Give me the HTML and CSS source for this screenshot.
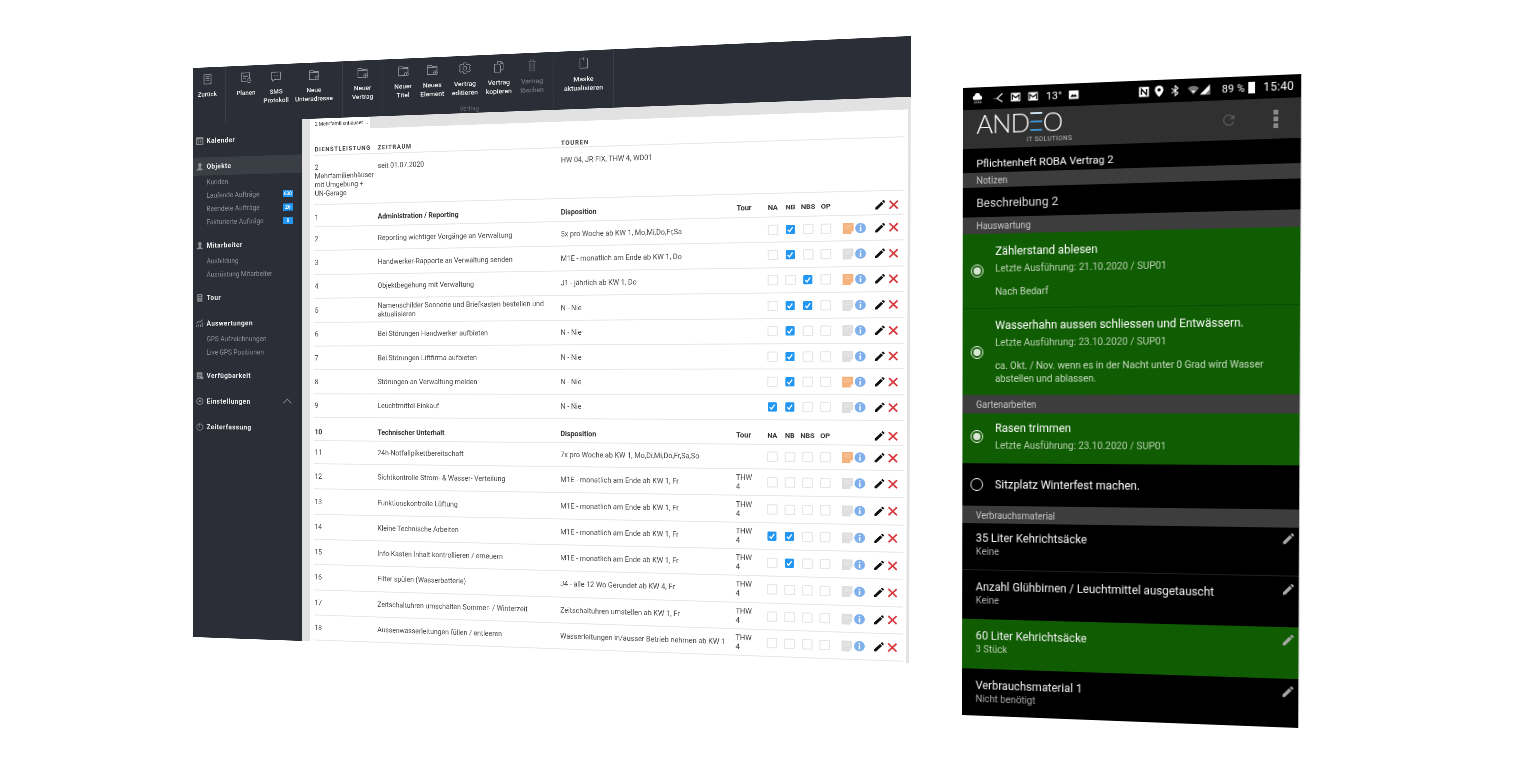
FILE: index.html
```html
<!DOCTYPE html>
<html lang="de">
<head>
  <meta charset="UTF-8">
  <meta name="viewport" content="width=device-width, initial-scale=1.0">
  <title>ANDEO Pflichtenheft</title>
  <link rel="stylesheet" href="styles.css">
</head>
<body>
  <svg class="icon-defs" width="0" height="0">
    <symbol id="i-folder" viewBox="0 0 24 24"><path d="M3 21V4h7l2 2h9v15zM3 8h18" fill="none" stroke="currentColor" stroke-width="1.2"/><circle cx="18" cy="18" r="3.6" fill="#2b2e36" stroke="currentColor" stroke-width="1.2"/><path d="M18 16v4M16 18h4" stroke="currentColor"/></symbol>
    <symbol id="i-back" viewBox="0 0 24 24"><path d="M5 3h14v18H5zM8 7h8M8 11h8M8 15h8" fill="none" stroke="currentColor" stroke-width="1.6"/></symbol>
    <symbol id="i-plan" viewBox="0 0 24 24"><path d="M3 3h16v16H3zM6 7h10M6 10h10M6 13h6" fill="none" stroke="currentColor" stroke-width="1.2"/><circle cx="18" cy="18" r="4" fill="#2b2e36" stroke="currentColor" stroke-width="1.2"/><path d="M18 16v2h2" fill="none" stroke="currentColor"/></symbol>
    <symbol id="i-sms" viewBox="0 0 24 24"><path d="M3 4h18v14H9l-4 3v-3H3z" fill="none" stroke="currentColor" stroke-width="1.2"/><path d="M8 11h1.500M11.300 11h1.500M14.600 11h1.500" stroke="currentColor" stroke-width="1.400"/></symbol>
    <symbol id="i-gear" viewBox="0 0 24 24"><path d="M10 2h4l.6 3 2.400 1 2.600-1.600 2.800 2.800L20.800 10l1 2-1 2 1.600 2.800-2.800 2.800-2.600-1.600-2.400 1-.6 3h-4l-.6-3-2.400-1-2.600 1.600-2.800-2.800L3.200 14l-1-2 1-2-1.600-2.800 2.800-2.800L7 6l2.400-1z" fill="none" stroke="currentColor" stroke-width="1.200"/><circle cx="12" cy="12" r="3.500" fill="none" stroke="currentColor" stroke-width="1.200"/></symbol>
    <symbol id="i-copy" viewBox="0 0 24 24"><path d="M4 7h8l3 3v12H4z" fill="none" stroke="currentColor" stroke-width="1.300"/><path d="M10 7V2h6l4 4v12h-5M16 2v4h4" fill="none" stroke="currentColor" stroke-width="1.300"/></symbol>
    <symbol id="i-trash" viewBox="0 0 24 24"><path d="M5 5h14M9 5V2h6v3M7 5v17h10V5M10 8v11M14 8v11" fill="none" stroke="currentColor" stroke-width="1.300"/></symbol>
    <symbol id="i-mask" viewBox="0 0 24 24"><path d="M9 4H5v17h14V4h-2M13 1l-3 3 3 3" fill="none" stroke="currentColor" stroke-width="1.300"/></symbol>
    <symbol id="i-calendar" viewBox="0 0 16 16"><path d="M1 1h14v14H1z" fill="#8b8d92"/><path d="M3 5h10v8H3z" fill="#2b2e36"/><path d="M5 7h2v4H5zM9 7h2v4H9z" fill="#8b8d92"/></symbol>
    <symbol id="i-person" viewBox="0 0 16 16"><circle cx="8" cy="5" r="3.500" fill="#8b8d92"/><path d="M6 8h4v3l4 2v2H2v-2l4-2z" fill="#8b8d92"/></symbol>
    <symbol id="i-book" viewBox="0 0 16 16"><path d="M3 1h10v14H3z" fill="#8b8d92"/><path d="M5 3h6v2H5zM5 7h6v1H5zM5 10h6v1H5z" fill="#2b2e36"/></symbol>
    <symbol id="i-chart" viewBox="0 0 16 16"><path d="M1 15v-4M5 15V9M9 15v-5M13 15V6M1 8l4-4 3 2 6-5" fill="none" stroke="#8b8d92" stroke-width="1.500"/></symbol>
    <symbol id="i-doc" viewBox="0 0 16 16"><path d="M2 2h11v12H2z" fill="#8b8d92"/><path d="M4 5h7M4 8h7M4 11h4" stroke="#2b2e36"/><circle cx="12.500" cy="12.500" r="2.500" fill="#8b8d92"/></symbol>
    <symbol id="i-cog" viewBox="0 0 16 16"><circle cx="8" cy="8" r="6" fill="none" stroke="#8b8d92" stroke-width="1.600"/><circle cx="8" cy="8" r="2" fill="#8b8d92"/></symbol>
    <symbol id="i-clock" viewBox="0 0 16 16"><circle cx="8" cy="8.500" r="6" fill="none" stroke="#8b8d92" stroke-width="1.300"/><path d="M8 1v8" stroke="#8b8d92" stroke-width="1.300"/></symbol>
    <symbol id="i-note" viewBox="0 0 22 24"><path d="M1 2h20v15l-5 6H1z" fill="currentColor"/><path d="M21 17h-5v6z" fill="#fff" opacity=".55"/><path d="M5 7h12M5 11h12" stroke="#fff" opacity=".35" stroke-width="1.500"/></symbol>
    <symbol id="i-info" viewBox="0 0 22 22"><circle cx="11" cy="11" r="11" fill="#7fb0ec"/><path d="M9.500 9h3v9h-3zM9.500 4h3v3h-3z" fill="#fff"/></symbol>
    <symbol id="i-pencil" viewBox="0 0 24 24"><path d="M20.710 7.040c.39-.39.39-1.040 0-1.410l-2.340-2.340c-.37-.39-1.020-.39-1.410 0l-1.840 1.830 3.750 3.750M3 17.250V21h3.750L17.810 9.930l-3.750-3.750z" fill="currentColor"/></symbol>
    <symbol id="i-x" viewBox="0 0 20 20"><path d="M2 2l16 16M18 2L2 18" fill="none" stroke="#d63a3f" stroke-width="3.400"/></symbol>
    <symbol id="i-check" viewBox="0 0 16 16"><path d="M3.500 8.500l3 3.500 5.500-8" fill="none" stroke="#fff" stroke-width="2.200"/></symbol>
    <symbol id="s-cloud" viewBox="0 0 16 16"><path d="M4 10a3 3 0 0 1 0-6 4 4 0 0 1 8 0 3 3 0 0 1 0 6z" fill="#fff"/><path d="M4 12v3M7 12v3M10 12v3M13 12v3" stroke="#fff"/></symbol>
    <symbol id="s-share" viewBox="0 0 16 16"><path d="M14 2L6 9l8 5M1 9h1M3.500 9h1" fill="none" stroke="#fff" stroke-width="1.500"/></symbol>
    <symbol id="s-mail" viewBox="0 0 16 16"><path d="M1 2h14v12H1z" fill="#fff"/><path d="M3 12V5l5 4 5-4v7" fill="none" stroke="#000" stroke-width="1.500"/></symbol>
    <symbol id="s-image" viewBox="0 0 16 16"><path d="M1 2h14v12H1z" fill="#fff"/><path d="M3 11l3-4 2 2 2-2 3 4z" fill="#000"/></symbol>
    <symbol id="s-nfc" viewBox="0 0 16 16"><path d="M1 1h14v14H1z" fill="#fff"/><path d="M4.500 12V4l7 8V4" fill="none" stroke="#000" stroke-width="1.800"/></symbol>
    <symbol id="s-pin" viewBox="0 0 16 16"><path d="M8 0a6 6 0 0 1 6 6c0 4-6 10-6 10S2 10 2 6a6 6 0 0 1 6-6z" fill="#fff"/><circle cx="8" cy="6" r="2.300" fill="#000"/></symbol>
    <symbol id="s-bt" viewBox="0 0 16 16"><path d="M3 4.500l9 7-4 3.500V1l4 3.500-9 7" fill="none" stroke="#fff" stroke-width="1.400"/></symbol>
    <symbol id="s-wifi" viewBox="0 0 18 16"><path d="M0 5q9-7 18 0l-9 10z" fill="#777"/><path d="M5.500 9h7L9 13z" fill="#fff"/></symbol>
    <symbol id="s-signal" viewBox="0 0 16 16"><path d="M15 1v14H1z" fill="#fff"/><path d="M15 8v7H8z" fill="#777"/></symbol>
    <symbol id="s-refresh" viewBox="0 0 24 24"><path d="M17.650 6.350A8 8 0 1 0 19.700 14h-2.100a6 6 0 1 1-1.400-6.200L13 11h7V4z" fill="currentColor"/></symbol>
  </svg>

  <div class="stage">
    <!-- Desktop window -->
    <section class="desk">
      <div class="toolbar">
        <div class="tool-group group-back">
          <div class="tool-row">
            <div class="tool"><svg><use href="#i-back"/></svg><span>Zurück</span></div>
          </div>
        </div>
        <div class="tool-group group-main">
          <div class="tool-row">
            <div class="tool"><svg><use href="#i-plan"/></svg><span>Planen</span></div>
            <div class="tool"><svg><use href="#i-sms"/></svg><span>SMS<br>Protokoll</span></div>
            <div class="tool"><svg><use href="#i-folder"/></svg><span>Neue<br>Unteradresse</span></div>
          </div>
        </div>
        <div class="tool-group group-new">
          <div class="tool-row">
            <div class="tool"><svg><use href="#i-folder"/></svg><span>Neuer<br>Vertrag</span></div>
          </div>
        </div>
        <div class="tool-group group-contract">
          <div class="tool-row">
            <div class="tool"><svg><use href="#i-folder"/></svg><span>Neuer<br>Titel</span></div>
            <div class="tool"><svg><use href="#i-folder"/></svg><span>Neues<br>Element</span></div>
            <div class="tool"><svg><use href="#i-gear"/></svg><span>Vertrag<br>editieren</span></div>
            <div class="tool"><svg><use href="#i-copy"/></svg><span>Vertrag<br>kopieren</span></div>
            <div class="tool tool-off"><svg><use href="#i-trash"/></svg><span>Vertrag<br>löschen</span></div>
          </div>
          <div class="tool-caption">Vertrag</div>
        </div>
        <div class="tool-group group-mask">
          <div class="tool-row">
            <div class="tool"><svg><use href="#i-mask"/></svg><span>Maske<br>aktualisieren</span></div>
          </div>
        </div>
      </div>

      <div class="desk-body">
        <aside class="sidebar">
          <div class="side-head"><svg><use href="#i-calendar"/></svg>Kalender</div>

          <div class="side-group">
            <div class="side-head side-active"><svg><use href="#i-person"/></svg>Objekte</div>
            <div class="side-sub">Kunden</div>
            <div class="side-sub">Laufende Aufträge<b class="badge">630</b></div>
            <div class="side-sub">Beendete Aufträge<b class="badge">26</b></div>
            <div class="side-sub">Fakturierte Aufträge<b class="badge">0</b></div>
          </div>

          <div class="side-group">
            <div class="side-head"><svg><use href="#i-person"/></svg>Mitarbeiter</div>
            <div class="side-sub">Ausbildung</div>
            <div class="side-sub">Ausrüstung Mitarbeiter</div>
          </div>

          <div class="side-head"><svg><use href="#i-book"/></svg>Tour</div>

          <div class="side-group">
            <div class="side-head"><svg><use href="#i-chart"/></svg>Auswertungen</div>
            <div class="side-sub">GPS Aufzeichnungen</div>
            <div class="side-sub">Live GPS Positionen</div>
          </div>

          <div class="side-head"><svg><use href="#i-doc"/></svg>Verfügbarkeit</div>
          <div class="side-head"><svg><use href="#i-cog"/></svg>Einstellungen<i class="chevron"></i></div>
          <div class="side-head"><svg><use href="#i-clock"/></svg>Zeiterfassung</div>
        </aside>

        <main class="content">
          <div class="tab-bar"><div class="tab">2 Mehrfamilienhäuser ...</div></div>
          <div class="panel">
            <div class="info-row info-head">
              <span>DIENSTLEISTUNG</span><span>ZEITRAUM</span><span class="info-tours">TOUREN</span>
            </div>
            <div class="info-row info-body">
              <span>2 Mehrfamilienhäuser mit Umgebung + UN-Garage</span><span>seit 01.07.2020</span><span>HW 04, JR FIX, THW 4, WD01</span>
            </div>

            <div class="row row-head">
              <span>1</span><b>Administration / Reporting</b><b>Disposition</b><b>Tour</b>
              <b class="ck">NA</b><b class="ck">NB</b><b class="ck">NBS</b><b class="ck">OP</b>
              <i></i><i></i>
              <svg class="pencil"><use href="#i-pencil"/></svg><svg class="del"><use href="#i-x"/></svg>
            </div>
            <div class="row">
              <span>2</span><span>Reporting wichtiger Vorgänge an Verwaltung</span><span>5x pro Woche ab KW 1, Mo,Mi,Do,Fr,Sa</span><span></span>
              <i class="box"></i><i class="box on"><svg><use href="#i-check"/></svg></i><i class="box"></i><i class="box"></i>
              <svg class="note note-on"><use href="#i-note"/></svg><svg class="info"><use href="#i-info"/></svg>
              <svg class="pencil"><use href="#i-pencil"/></svg><svg class="del"><use href="#i-x"/></svg>
            </div>
            <div class="row">
              <span>3</span><span>Handwerker-Rapporte an Verwaltung senden</span><span>M1E - monatlich am Ende ab KW 1, Do</span><span></span>
              <i class="box"></i><i class="box on"><svg><use href="#i-check"/></svg></i><i class="box"></i><i class="box"></i>
              <svg class="note"><use href="#i-note"/></svg><svg class="info"><use href="#i-info"/></svg>
              <svg class="pencil"><use href="#i-pencil"/></svg><svg class="del"><use href="#i-x"/></svg>
            </div>
            <div class="row">
              <span>4</span><span>Objektbegehung mit Verwaltung</span><span>J1 - jährlich ab KW 1, Do</span><span></span>
              <i class="box"></i><i class="box"></i><i class="box on"><svg><use href="#i-check"/></svg></i><i class="box"></i>
              <svg class="note note-on"><use href="#i-note"/></svg><svg class="info"><use href="#i-info"/></svg>
              <svg class="pencil"><use href="#i-pencil"/></svg><svg class="del"><use href="#i-x"/></svg>
            </div>
            <div class="row">
              <span>5</span><span>Namenschilder Sonnerie und Briefkasten bestellen und aktualisieren</span><span>N - Nie</span><span></span>
              <i class="box"></i><i class="box on"><svg><use href="#i-check"/></svg></i><i class="box on"><svg><use href="#i-check"/></svg></i><i class="box"></i>
              <svg class="note"><use href="#i-note"/></svg><svg class="info"><use href="#i-info"/></svg>
              <svg class="pencil"><use href="#i-pencil"/></svg><svg class="del"><use href="#i-x"/></svg>
            </div>
            <div class="row">
              <span>6</span><span>Bei Störungen Handwerker aufbieten</span><span>N - Nie</span><span></span>
              <i class="box"></i><i class="box on"><svg><use href="#i-check"/></svg></i><i class="box"></i><i class="box"></i>
              <svg class="note"><use href="#i-note"/></svg><svg class="info"><use href="#i-info"/></svg>
              <svg class="pencil"><use href="#i-pencil"/></svg><svg class="del"><use href="#i-x"/></svg>
            </div>
            <div class="row">
              <span>7</span><span>Bei Störungen Liftfirma aufbieten</span><span>N - Nie</span><span></span>
              <i class="box"></i><i class="box on"><svg><use href="#i-check"/></svg></i><i class="box"></i><i class="box"></i>
              <svg class="note"><use href="#i-note"/></svg><svg class="info"><use href="#i-info"/></svg>
              <svg class="pencil"><use href="#i-pencil"/></svg><svg class="del"><use href="#i-x"/></svg>
            </div>
            <div class="row">
              <span>8</span><span>Störungen an Verwaltung melden</span><span>N - Nie</span><span></span>
              <i class="box"></i><i class="box on"><svg><use href="#i-check"/></svg></i><i class="box"></i><i class="box"></i>
              <svg class="note note-on"><use href="#i-note"/></svg><svg class="info"><use href="#i-info"/></svg>
              <svg class="pencil"><use href="#i-pencil"/></svg><svg class="del"><use href="#i-x"/></svg>
            </div>
            <div class="row">
              <span>9</span><span>Leuchtmittel-Einkauf</span><span>N - Nie</span><span></span>
              <i class="box on"><svg><use href="#i-check"/></svg></i><i class="box on"><svg><use href="#i-check"/></svg></i><i class="box"></i><i class="box"></i>
              <svg class="note"><use href="#i-note"/></svg><svg class="info"><use href="#i-info"/></svg>
              <svg class="pencil"><use href="#i-pencil"/></svg><svg class="del"><use href="#i-x"/></svg>
            </div>

            <div class="row row-head row-head2">
              <b>10</b><b>Technischer Unterhalt</b><b>Disposition</b><b>Tour</b>
              <b class="ck">NA</b><b class="ck">NB</b><b class="ck">NBS</b><b class="ck">OP</b>
              <i></i><i></i>
              <svg class="pencil"><use href="#i-pencil"/></svg><svg class="del"><use href="#i-x"/></svg>
            </div>
            <div class="row row-short">
              <span>11</span><span>24h-Notfallpikettbereitschaft</span><span>7x pro Woche ab KW 1, Mo,Di,Mi,Do,Fr,Sa,So</span><span></span>
              <i class="box"></i><i class="box"></i><i class="box"></i><i class="box"></i>
              <svg class="note note-on"><use href="#i-note"/></svg><svg class="info"><use href="#i-info"/></svg>
              <svg class="pencil"><use href="#i-pencil"/></svg><svg class="del"><use href="#i-x"/></svg>
            </div>
            <div class="row row-tall">
              <span>12</span><span>Sichtkontrolle Strom- &amp; Wasser- Verteilung</span><span>M1E - monatlich am Ende ab KW 1, Fr</span><span class="tour">THW 4</span>
              <i class="box"></i><i class="box"></i><i class="box"></i><i class="box"></i>
              <svg class="note"><use href="#i-note"/></svg><svg class="info"><use href="#i-info"/></svg>
              <svg class="pencil"><use href="#i-pencil"/></svg><svg class="del"><use href="#i-x"/></svg>
            </div>
            <div class="row row-tall">
              <span>13</span><span>Funktionskontrolle Lüftung</span><span>M1E - monatlich am Ende ab KW 1, Fr</span><span class="tour">THW 4</span>
              <i class="box"></i><i class="box"></i><i class="box"></i><i class="box"></i>
              <svg class="note"><use href="#i-note"/></svg><svg class="info"><use href="#i-info"/></svg>
              <svg class="pencil"><use href="#i-pencil"/></svg><svg class="del"><use href="#i-x"/></svg>
            </div>
            <div class="row row-tall">
              <span>14</span><span>Kleine Technische Arbeiten</span><span>M1E - monatlich am Ende ab KW 1, Fr</span><span class="tour">THW 4</span>
              <i class="box on"><svg><use href="#i-check"/></svg></i><i class="box on"><svg><use href="#i-check"/></svg></i><i class="box"></i><i class="box"></i>
              <svg class="note"><use href="#i-note"/></svg><svg class="info"><use href="#i-info"/></svg>
              <svg class="pencil"><use href="#i-pencil"/></svg><svg class="del"><use href="#i-x"/></svg>
            </div>
            <div class="row row-tall">
              <span>15</span><span>Info-Kasten Inhalt kontrollieren / erneuern</span><span>M1E - monatlich am Ende ab KW 1, Fr</span><span class="tour">THW 4</span>
              <i class="box"></i><i class="box on"><svg><use href="#i-check"/></svg></i><i class="box"></i><i class="box"></i>
              <svg class="note"><use href="#i-note"/></svg><svg class="info"><use href="#i-info"/></svg>
              <svg class="pencil"><use href="#i-pencil"/></svg><svg class="del"><use href="#i-x"/></svg>
            </div>
            <div class="row row-tall">
              <span>16</span><span>Filter spülen (Wasserbatterie)</span><span>J4 - alle 12 Wo Gerundet ab KW 4, Fr</span><span class="tour">THW 4</span>
              <i class="box"></i><i class="box"></i><i class="box"></i><i class="box"></i>
              <svg class="note"><use href="#i-note"/></svg><svg class="info"><use href="#i-info"/></svg>
              <svg class="pencil"><use href="#i-pencil"/></svg><svg class="del"><use href="#i-x"/></svg>
            </div>
            <div class="row row-tall">
              <span>17</span><span>Zeitschaltuhren umschalten Sommer- / Winterzeit</span><span>Zeitschaltuhren umstellen ab KW 1, Fr</span><span class="tour">THW 4</span>
              <i class="box"></i><i class="box"></i><i class="box"></i><i class="box"></i>
              <svg class="note"><use href="#i-note"/></svg><svg class="info"><use href="#i-info"/></svg>
              <svg class="pencil"><use href="#i-pencil"/></svg><svg class="del"><use href="#i-x"/></svg>
            </div>
            <div class="row row-tall">
              <span>18</span><span>Aussenwasserleitungen füllen / entleeren</span><span>Wasserleitungen in/ausser Betrieb nehmen ab KW 1</span><span class="tour">THW 4</span>
              <i class="box"></i><i class="box"></i><i class="box"></i><i class="box"></i>
              <svg class="note"><use href="#i-note"/></svg><svg class="info"><use href="#i-info"/></svg>
              <svg class="pencil"><use href="#i-pencil"/></svg><svg class="del"><use href="#i-x"/></svg>
            </div>
          </div>
        </main>
      </div>
    </section>

    <!-- Phone window -->
    <section class="phone">
      <div class="status">
        <div class="status-left">
          <svg class="st st-cloud"><use href="#s-cloud"/></svg>
          <svg class="st st-share"><use href="#s-share"/></svg>
          <svg class="st st-mail"><use href="#s-mail"/></svg>
          <svg class="st st-mail"><use href="#s-mail"/></svg>
          <span class="st-temp">13°</span>
          <svg class="st st-image"><use href="#s-image"/></svg>
        </div>
        <div class="status-right">
          <svg class="st"><use href="#s-nfc"/></svg>
          <svg class="st"><use href="#s-pin"/></svg>
          <svg class="st"><use href="#s-bt"/></svg>
          <svg class="st st-wifi"><use href="#s-wifi"/></svg>
          <svg class="st st-signal"><use href="#s-signal"/></svg>
          <span class="st-pct">89 %</span>
          <i class="battery"></i>
          <span class="st-time">15:40</span>
        </div>
      </div>

      <div class="appbar">
        <div class="logo">
          <div class="logo-word">AND<span class="logo-e">E</span>O</div>
          <div class="logo-sub">IT SOLUTIONS</div>
        </div>
        <svg class="refresh"><use href="#s-refresh"/></svg>
        <div class="dots"><i></i><i></i><i></i></div>
      </div>

      <div class="p-title">Pflichtenheft ROBA Vertrag 2</div>
      <div class="p-section p-notes">Notizen</div>
      <div class="p-desc">Beschreibung 2</div>
      <div class="p-section">Hauswartung</div>

      <div class="job job-done job-one">
        <i class="radio"></i>
        <div>
          <div class="job-title">Zählerstand ablesen</div>
          <div class="job-meta">Letzte Ausführung: 21.10.2020 / SUP01</div>
          <div class="job-note">Nach Bedarf</div>
        </div>
      </div>
      <div class="job job-done job-two">
        <i class="radio"></i>
        <div>
          <div class="job-title">Wasserhahn aussen schliessen und Entwässern.</div>
          <div class="job-meta">Letzte Ausführung: 23.10.2020 / SUP01</div>
          <div class="job-note">ca. Okt. / Nov. wenn es in der Nacht unter 0 Grad wird Wasser abstellen und ablassen.</div>
        </div>
      </div>
      <div class="p-section p-section-lg">Gartenarbeiten</div>
      <div class="job job-done job-three">
        <i class="radio"></i>
        <div>
          <div class="job-title">Rasen trimmen</div>
          <div class="job-meta">Letzte Ausführung: 23.10.2020 / SUP01</div>
        </div>
      </div>
      <div class="job job-four">
        <i class="radio"></i>
        <div class="job-title">Sitzplatz Winterfest machen.</div>
      </div>
      <div class="p-section p-section-lg">Verbrauchsmaterial</div>

      <div class="stock stock-first">
        <div><div class="stock-name">35 Liter Kehrichtsäcke</div><div class="stock-val">Keine</div></div>
        <svg class="stock-edit"><use href="#i-pencil"/></svg>
      </div>
      <div class="stock stock-line">
        <div><div class="stock-name">Anzahl Glühbirnen / Leuchtmittel ausgetauscht</div><div class="stock-val">Keine</div></div>
        <svg class="stock-edit"><use href="#i-pencil"/></svg>
      </div>
      <div class="stock stock-green">
        <div><div class="stock-name">60 Liter Kehrichtsäcke</div><div class="stock-val">3 Stück</div></div>
        <svg class="stock-edit"><use href="#i-pencil"/></svg>
      </div>
      <div class="stock">
        <div><div class="stock-name">Verbrauchsmaterial 1</div><div class="stock-val">Nicht benötigt</div></div>
        <svg class="stock-edit"><use href="#i-pencil"/></svg>
      </div>
    </section>
  </div>
</body>
</html>
```

FILE: styles.css
```css
/* Basic layout */
html, body {
  margin: 0;
  padding: 0;
  background: #fff;
  font-family: Roboto, "Liberation Sans", sans-serif;
}
* {
  box-sizing: border-box;
}
.icon-defs {
  position: absolute;
}
.stage {
  position: relative;
  width: 1527px;
  height: 767px;
  overflow: hidden;
}
i {
  font-style: normal;
}

/* Desktop window: a flat 1436x1200 page warped onto its quad */
.desk {
  position: absolute;
  left: 0;
  top: 0;
  width: 1436px;
  height: 1200px;
  display: flex;
  flex-direction: column;
  overflow: hidden;
  transform-origin: 0 0;
  transform: matrix3d(0.441248, -0.024606, 0, -0.00006449, 0.00040765, 0.475512, 0, 0.000002112, 0, 0, 1, 0, 193, 68, 0, 1);
  filter: blur(0.7px);
}

/* Toolbar */
.toolbar {
  flex: none;
  display: flex;
  height: 116px;
  background: #2b2e36;
  color: #f0f0f1;
}
.tool-group {
  flex: none;
  display: flex;
  flex-direction: column;
  border-right: 1px solid #3e4148;
}
.group-back { width: 72px; }
.group-main { width: 251px; padding-left: 14px; }
.group-new { width: 85px; }
.group-contract { width: 349px; padding-left: 8px; }
.group-mask { width: 118px; }
.tool-row {
  flex: 1;
  display: grid;
  grid-auto-flow: column;
  grid-auto-columns: 1fr;
}
.group-back .tool-row { padding-right: 8px; }
.group-main .tool-row { grid-template-columns: 60px 70px 92px; }
.group-contract .tool-row { grid-template-columns: 67px 54px 80px 58px 76px; }
.tool {
  display: flex;
  flex-direction: column;
  align-items: center;
  padding-top: 12px;
  font-size: 13.5px;
  font-weight: 500;
  line-height: 18px;
  text-align: center;
}
.tool svg {
  flex: none;
  width: 26px;
  height: 26px;
  margin-bottom: 9px;
  color: #999ca1;
}
.tool-off {
  color: #85888d;
  font-weight: 400;
}
.tool-off svg {
  color: #5f6268;
}
.tool-caption {
  height: 18px;
  font-size: 12px;
  line-height: 18px;
  text-align: center;
  color: #6f7278;
}

.desk-body {
  flex: 1;
  display: flex;
  min-height: 0;
}

/* Sidebar */
.sidebar {
  flex: none;
  width: 237px;
  display: flex;
  flex-direction: column;
  gap: 16px;
  padding-top: 19px;
  background: #2b2e36;
}
.side-head {
  display: flex;
  align-items: center;
  height: 38px;
  padding-left: 6px;
  font-size: 14px;
  font-weight: 700;
  letter-spacing: 0.8px;
  color: #f0f0f1;
}
.side-head svg {
  flex: none;
  width: 18px;
  height: 18px;
  margin-right: 6px;
}
.side-active {
  background: #3a3f45;
}
.side-sub {
  display: flex;
  align-items: center;
  justify-content: space-between;
  height: 28px;
  padding: 0 20px 0 30px;
  font-size: 14px;
  color: #8b8e93;
}
.badge {
  width: 21px;
  height: 15px;
  font-size: 10px;
  line-height: 15px;
  text-align: center;
  color: #fff;
  background: #2196f3;
}
.chevron {
  width: 11px;
  height: 11px;
  margin: 6px 26px 0 auto;
  border-left: 1.5px solid #b5b7ba;
  border-top: 1.5px solid #b5b7ba;
  transform: rotate(45deg) scale(1.2);
}

/* Main content */
.content {
  flex: 1;
  display: flex;
  flex-direction: column;
  min-width: 0;
  padding: 0 5px 0 17px;
  background: #e2e2e2;
}
.tab-bar {
  flex: none;
  height: 24px;
}
.tab {
  width: 127px;
  height: 24px;
  padding-left: 10px;
  font-size: 10.5px;
  line-height: 24px;
  white-space: nowrap;
  color: #333;
  background: #fff;
}
.panel {
  flex: 1;
  padding: 0 6px 0 8px;
  font-size: 14px;
  line-height: 18px;
  color: #484848;
  background: #fff;
}
.info-row {
  display: grid;
  grid-template-columns: 135px 374px 1fr;
  border-bottom: 2px solid #e8e8e8;
}
.info-row span:first-child {
  padding-left: 2px;
}
.info-head {
  align-items: end;
  height: 53px;
  padding-bottom: 2px;
  font-size: 12px;
  font-weight: 700;
  letter-spacing: 1.5px;
  color: #404040;
}
.info-tours {
  margin-bottom: -3px;
}
.info-body {
  height: 102px;
  padding-top: 15px;
}
.info-body span:first-child {
  padding-right: 6px;
}

/* Table rows */
.row {
  display: grid;
  grid-template-columns: 135px 374px 342px 52px 33px 33px 33px 33px 36px 24px 36px 24px;
  align-items: center;
  height: 49.4px;
  border-bottom: 2px solid #e8e8e8;
}
.row > :first-child {
  padding-left: 2px;
}
.row > :nth-child(2) {
  padding-right: 30px;
}
.row b {
  color: #333;
}
.row-head {
  height: 46px;
  padding-top: 8px;
}
.row-head2 {
  height: 48px;
  padding-top: 12px;
}
.row-short {
  height: 48px;
}
.row-tall {
  height: 52.3px;
}
.tour {
  max-width: 38px;
}
.ck {
  text-align: center;
  font-size: 13.5px;
}
.box {
  justify-self: center;
  width: 20px;
  height: 20px;
  border: 2px solid #e6e6e6;
  border-radius: 2px;
}
.box.on {
  width: 17px;
  height: 18px;
  border: 0;
  background: #2196f3;
}
.box svg {
  display: block;
  width: 17px;
  height: 18px;
}
.note {
  justify-self: end;
  width: 22px;
  height: 24px;
  color: #dedede;
}
.note-on {
  color: #f4b27c;
}
.info {
  justify-self: center;
  width: 20px;
  height: 22px;
}
.pencil {
  justify-self: end;
  width: 24px;
  height: 24px;
  color: #111;
}
.del {
  justify-self: center;
  width: 19px;
  height: 21px;
}

/* Phone window: a flat 360x680 page warped onto its quad */
.phone {
  position: absolute;
  left: 0;
  top: 0;
  width: 360px;
  height: 680px;
  overflow: hidden;
  color: #eee;
  background: #000;
  border-right: 1px solid #c4c4c4;
  transform-origin: 0 0;
  transform: matrix3d(0.791956, -0.047398, 0, -0.00011499, 0.006404, 0.927912, 0, 0.000008186, 0, 0, 1, 0, 963, 88, 0, 1);
  filter: blur(0.4px);
}
.status {
  display: flex;
  justify-content: space-between;
  align-items: center;
  height: 24px;
  padding: 0 7px 0 10px;
  font-size: 11.5px;
  color: #fff;
}
.status-left,
.status-right {
  display: flex;
  align-items: center;
}
.status-left {
  gap: 7px;
}
.status-right {
  gap: 4.5px;
}
.st {
  flex: none;
  width: 12px;
  height: 12px;
}
.st-temp {
  margin: 0 0 0 1px;
}
.st-share {
  margin-left: 4px;
}
.st-wifi {
  margin-left: 3px;
}
.st-signal {
  margin-left: -4.5px;
}
.st-pct {
  margin-left: 7px;
  font-size: 11px;
  letter-spacing: 0.2px;
}
.battery {
  width: 7px;
  height: 12px;
  margin-left: -1px;
  background: #fff;
}
.st-time {
  margin-left: 4px;
  font-size: 12px;
  letter-spacing: 0.3px;
}
.appbar {
  display: flex;
  align-items: flex-start;
  height: 42px;
  padding-left: 15px;
  background: #303030;
}
.logo {
  width: 260px;
  padding-top: 2px;
}
.logo-word {
  font-family: Lato, Roboto, sans-serif;
  font-size: 28px;
  font-weight: 300;
  line-height: 27px;
  letter-spacing: -1px;
  color: #fff;
}
.logo-e {
  color: transparent;
  background: linear-gradient(#cfe4f2 0 12%, transparent 12% 44%, #3f93cf 44% 56%, transparent 56% 88%, #3f93cf 88%) center / 88% 20px no-repeat;
}
.logo-sub {
  margin: 1px 0 0 55px;
  font-size: 7px;
  line-height: 9px;
  letter-spacing: 0.4px;
  color: #bdbdbd;
}
.refresh {
  flex: none;
  width: 18px;
  height: 18px;
  margin: 12px 0 0 1px;
  color: #555;
}
.dots {
  display: flex;
  flex-direction: column;
  gap: 2px;
  margin: 12px 0 0 37px;
}
.dots i {
  width: 5px;
  height: 5px;
  background: #8a8a8a;
}
.p-title {
  height: 26px;
  padding: 8px 0 0 15px;
  font-size: 11.6px;
  line-height: 16px;
  color: #fff;
}
.p-section {
  height: 18px;
  padding: 1px 0 0 15px;
  font-size: 10px;
  line-height: 18px;
  color: #c8c8c8;
  background: #3d3d3d;
}
.p-notes {
  height: 16px;
  line-height: 16px;
}
.p-section-lg {
  height: 19.5px;
  line-height: 19.5px;
}
.p-desc {
  height: 32px;
  padding-left: 15px;
  font-size: 13px;
  line-height: 34px;
  color: #ddd;
}
.job {
  display: flex;
  align-items: center;
  gap: 13px;
  padding-left: 9px;
  border-bottom: 1px solid #0a4a02;
}
.job-done {
  background: #0f5c02;
}
.job-one { height: 81px; }
.job-two { height: 93px; border-bottom: 0; }
.job-three { height: 54px; padding-bottom: 4px; border-bottom: 0; }
.job-four { height: 46px; border-bottom: 0; }
.radio {
  flex: none;
  position: relative;
  width: 14px;
  height: 14px;
  border: 1.5px solid #fff;
  border-radius: 50%;
}
.job-done .radio::after {
  content: "";
  position: absolute;
  inset: 2px;
  border-radius: 50%;
  background: #d8e5d4;
}
.job-title {
  font-size: 12.3px;
  line-height: 16px;
  color: #fff;
}
.job-meta {
  margin-top: 3px;
  font-size: 10.5px;
  line-height: 15px;
  color: #b7cfb0;
}
.job-note {
  margin-top: 11px;
  font-size: 10.5px;
  line-height: 14px;
  color: #c8dcc2;
  padding-right: 16px;
}
.stock {
  display: flex;
  justify-content: space-between;
  align-items: flex-start;
  height: 53px;
  padding: 11px 3px 0 15px;
}
.stock-first {
  height: 51px;
  padding-top: 9px;
  border-bottom: 1px solid #222;
}
.stock-green {
  height: 54px;
  background: #0f5c02;
}
.stock-name {
  font-size: 12.3px;
  line-height: 15px;
  color: #f0f0f0;
}
.stock-val {
  font-size: 10.5px;
  line-height: 14px;
  color: #aaa;
}
.stock-green .stock-val {
  color: #b7cfb0;
}
.stock-edit {
  flex: none;
  width: 15px;
  height: 15px;
  margin-top: -5px;
  color: #a8a8a8;
}
```
